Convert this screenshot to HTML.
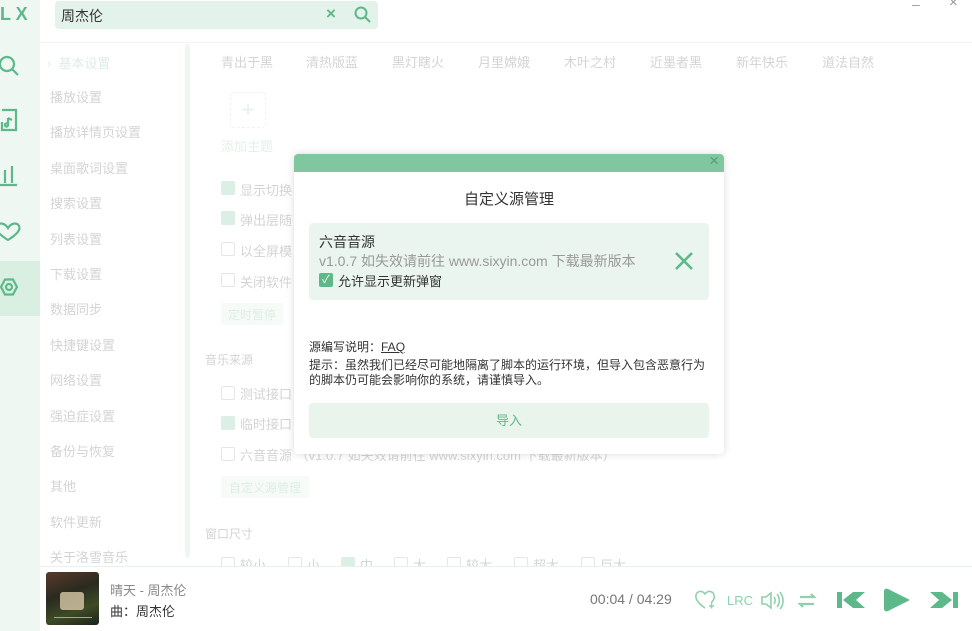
<!DOCTYPE html><html><head><meta charset="utf-8"><style>
*{margin:0;padding:0;box-sizing:border-box}
body{width:972px;height:631px;overflow:hidden;background:#fff;font-family:"Liberation Sans","Noto Sans CJK SC",sans-serif;position:relative;font-size:13px}
.a{position:absolute;white-space:nowrap}
.f{color:#d4d4d4}
.cb{position:absolute;width:14px;height:14px;border:1px solid #e6e6e6;border-radius:2px}
.cb.on{background:#dcefe4;border-color:#dcefe4}
</style></head><body>
<div class="a" style="left:0;top:0;width:40px;height:631px;background:#eef7f2"></div>
<div class="a" style="left:0;top:261px;width:40px;height:55px;background:#d8efe2"></div>
<div class="a" style="left:0;top:4px;color:#5db98a;font-weight:bold;font-size:18px">L X</div>
<svg class="a" style="left:0;top:52px" width="24" height="260" fill="none" stroke="#5db98a" stroke-width="2.2">
<circle cx="7" cy="12" r="7"/><path d="M12 17l6 6"/>
<path d="M2 58h14v20H2v-8M8 66v7M8 66l4 2"/><circle cx="6.5" cy="73" r="1.6"/>
<path d="M0 133h17M5 118v13M12 114v17"/>
<path d="M9 192c-3-5-9-6-11-2-2 4 3 9 11 14 8-5 13-10 11-14-2-4-8-3-11 2z" transform="translate(-1 -16)"/>
<path d="M1 235l4-7.5h8l4 7.5-4 7.5H5z"/><circle cx="9" cy="235" r="3"/>
</svg>
<div class="a" style="left:55px;top:1px;width:323px;height:28px;background:#e3f2ea;border-radius:4px"></div>
<div class="a" style="left:61px;top:6px;font-size:14px;color:#333">周杰伦</div>
<div class="a" style="left:326px;top:4px;color:#5db98a;font-size:17px;font-weight:bold">×</div>
<svg class="a" style="left:354px;top:6px" width="18" height="18" fill="none" stroke="#5db98a" stroke-width="2"><circle cx="7" cy="7" r="5.5"/><path d="M11 11l5 5"/></svg>
<div class="a" style="left:912px;top:-4px;color:#999;font-size:14px">–</div>
<div class="a" style="left:949px;top:-6px;color:#999;font-size:15px">×</div>
<div class="a" style="left:40px;top:42px;width:932px;height:1px;background:#f4f4f4"></div>
<div class="a" style="left:185px;top:44px;width:5px;height:514px;background:#eef7f2;border-radius:3px"></div>
<div class="a" style="left:47px;top:53px;color:#dcefe4">›&nbsp; 基本设置</div>
<div class="a f" style="left:50px;top:80px;line-height:35.4px">播放设置<br>播放详情页设置<br>桌面歌词设置<br>搜索设置<br>列表设置<br>下载设置<br>数据同步<br>快捷键设置<br>网络设置<br>强迫症设置<br>备份与恢复<br>其他<br>软件更新<br>关于洛雪音乐</div>
<div class="a f" style="left:221px;top:52px">青出于黑</div>
<div class="a f" style="left:306px;top:52px">清热版蓝</div>
<div class="a f" style="left:392px;top:52px">黑灯瞎火</div>
<div class="a f" style="left:478px;top:52px">月里嫦娥</div>
<div class="a f" style="left:564px;top:52px">木叶之村</div>
<div class="a f" style="left:650px;top:52px">近墨者黑</div>
<div class="a f" style="left:736px;top:52px">新年快乐</div>
<div class="a f" style="left:822px;top:52px">道法自然</div>
<div class="a" style="left:230px;top:92px;width:36px;height:36px;border:1px dashed #eef5f0;border-radius:4px;color:#e5f2ea;font-size:22px;text-align:center;line-height:33px">+</div>
<div class="a" style="left:221px;top:136px;color:#e3f1e8">添加主题</div>
<div class="cb on" style="left:221px;top:181px"></div><div class="a f" style="left:240px;top:180px">显示切换</div>
<div class="cb on" style="left:221px;top:211px"></div><div class="a f" style="left:240px;top:210px">弹出层随</div>
<div class="cb" style="left:221px;top:242px"></div><div class="a f" style="left:240px;top:241px">以全屏模</div>
<div class="cb" style="left:221px;top:273px"></div><div class="a f" style="left:240px;top:272px">关闭软件</div>
<div class="a" style="left:221px;top:303px;width:62px;height:22px;background:#f6fbf8;color:#dcefe4;font-size:12px;padding:3px 7px">定时暂停</div>
<div class="a f" style="left:205px;top:351px;font-size:12px">音乐来源</div>
<div class="cb" style="left:221px;top:386px"></div><div class="a f" style="left:240px;top:384px">测试接口</div>
<div class="cb on" style="left:221px;top:416px"></div><div class="a f" style="left:240px;top:414px">临时接口</div>
<div class="cb" style="left:221px;top:447px"></div><div class="a f" style="left:240px;top:445px">六音音源 （v1.0.7 如失效请前往 www.sixyin.com 下载最新版本）</div>
<div class="a" style="left:221px;top:476px;width:88px;height:22px;background:#f6fbf8;color:#dcefe4;font-size:12px;padding:3px 8px">自定义源管理</div>
<div class="a f" style="left:205px;top:525px;font-size:12px">窗口尺寸</div>
<div class="a" style="left:200px;top:556px;width:772px;height:11px;overflow:hidden">
<div class="cb" style="left:21px;top:1px"></div><div class="a f" style="left:40px;top:-1px">较小</div>
<div class="cb" style="left:88px;top:1px"></div><div class="a f" style="left:107px;top:-1px">小</div>
<div class="cb on" style="left:141px;top:1px"></div><div class="a f" style="left:160px;top:-1px">中</div>
<div class="cb" style="left:194px;top:1px"></div><div class="a f" style="left:213px;top:-1px">大</div>
<div class="cb" style="left:247px;top:1px"></div><div class="a f" style="left:266px;top:-1px">较大</div>
<div class="cb" style="left:314px;top:1px"></div><div class="a f" style="left:333px;top:-1px">超大</div>
<div class="cb" style="left:381px;top:1px"></div><div class="a f" style="left:400px;top:-1px">巨大</div>
</div>
<!-- player -->
<div class="a" style="left:40px;top:566px;width:932px;height:1px;background:#e6f3ec"></div>
<div class="a" style="left:46px;top:572px;width:53px;height:53px;border-radius:3px;background:linear-gradient(160deg,#5a3a2a,#2a2a20 40%,#3e4a26 70%,#1d2218);overflow:hidden"><div style="position:absolute;left:14px;top:20px;width:24px;height:18px;background:#d8c9a8;border-radius:3px;opacity:.8"></div><div style="position:absolute;left:8px;top:45px;width:38px;height:1px;background:#c9a040"></div></div>
<div class="a" style="left:110px;top:580px;color:#888">晴天 - 周杰伦</div>
<div class="a" style="left:110px;top:601px;color:#333">曲：周杰伦</div>
<div class="a" style="left:590px;top:591px;color:#777;font-size:14px">00:04 / 04:29</div>
<svg class="a" style="left:694px;top:588px" width="130" height="26" fill="none" stroke="#8fd0ad" stroke-width="1.6">
<path d="M11 20C4 15 1 11 2 7c1-4 6-5 9-1 3-4 8-3 9 1 1 3-1 6-3 8M15 18h5M17.5 15.5v5"/>
<text x="33" y="17" fill="#8fd0ad" stroke="none" font-size="13" font-family="Liberation Sans">LRC</text>
<path d="M68 9h4l5-4v15l-5-4h-4zM80 9c1.5 2 1.5 5 0 7M83 6c3 3.5 3 9.5 0 13M86 4c4 5 4 13 0 17"/>
<path d="M106 9h14l-3-3M120 16h-14l3 3" stroke-width="2.2"/>
</svg>
<svg class="a" style="left:836px;top:586px" width="130" height="28" fill="#5db98a">
<path d="M1 6h5v16H1zM7 14l10-8h12l-9 8 9 8H17z"/>
<path d="M52 3l22 11-22 11c-2 1-4 0-4-2V5c0-2 2-3 4-2z"/>
<path d="M122 6h-5v16h5zM116 14l-10-8H94l9 8-9 8h12z"/>
</svg>
<!-- modal -->
<div class="a" style="left:294px;top:154px;width:430px;height:300px;background:#fff;border-radius:4px;box-shadow:0 0 8px rgba(0,0,0,.15);overflow:hidden">
<div style="height:18px;background:#80c69f;position:relative"><span style="position:absolute;right:5px;top:-3px;color:#5a9a78;font-size:17px">×</span></div>
<div class="a" style="left:0;width:430px;top:34px;text-align:center;font-size:15px;color:#333">自定义源管理</div>
<div class="a" style="left:15px;top:69px;width:400px;height:77px;background:#ebf5ef;border-radius:4px">
<div class="a" style="left:10px;top:9px;font-size:14px;color:#333">六音音源</div>
<div class="a" style="left:10px;top:28px;font-size:14px;color:#999">v1.0.7 如失效请前往 www.sixyin.com 下载最新版本</div>
<div class="a" style="left:10px;top:50px;width:14px;height:14px;background:#5db98a;border-radius:2px;color:#fff;font-size:11px;text-align:center;line-height:14px">✓</div>
<div class="a" style="left:29px;top:48px;color:#333">允许显示更新弹窗</div>
<svg class="a" style="left:365px;top:28px" width="20" height="20" stroke="#5db98a" stroke-width="2.6"><path d="M2 2l16 16M18 2L2 18"/></svg>
</div>
<div class="a" style="left:15px;top:184px;font-size:12px;color:#333">源编写说明：<u>FAQ</u></div>
<div class="a" style="left:15px;top:204px;font-size:12px;color:#333;line-height:15px">提示：虽然我们已经尽可能地隔离了脚本的运行环境，但导入包含恶意行为<br>的脚本仍可能会影响你的系统，请谨慎导入。</div>
<div class="a" style="left:15px;top:249px;width:400px;height:35px;background:#e8f4ec;border-radius:4px;text-align:center;line-height:35px;color:#5db98a">导入</div>
</div>
</body></html>
